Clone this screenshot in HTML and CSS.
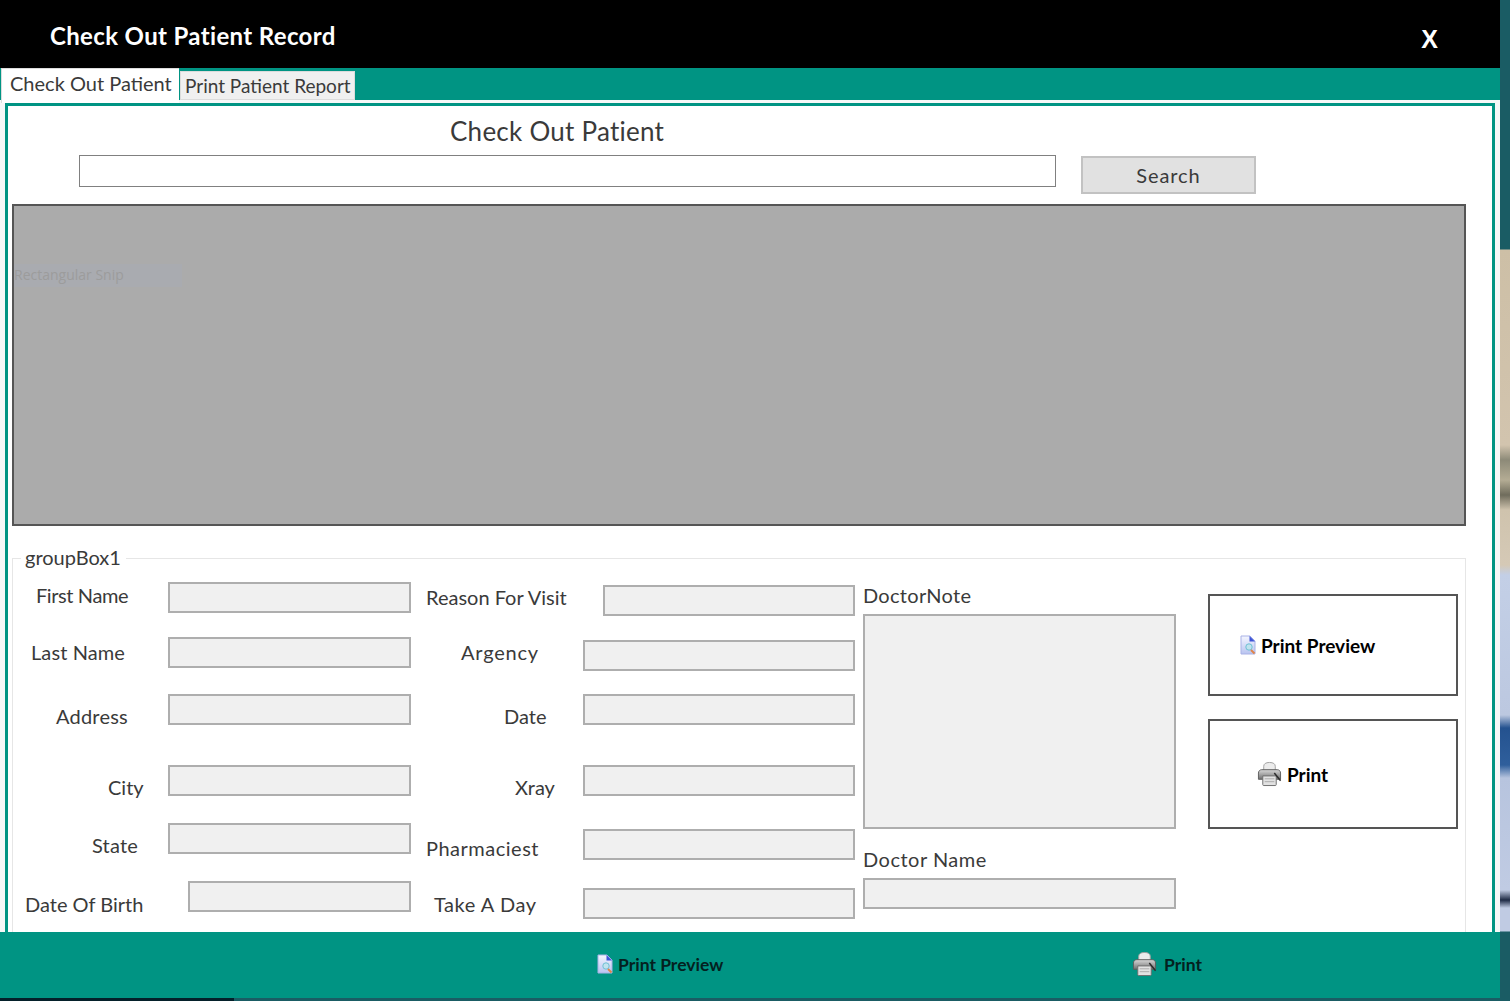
FILE: index.html
```html
<!DOCTYPE html>
<html lang="en">
<head>
  <meta charset="UTF-8" />
  <title>Check Out Patient Record</title>
  <meta name="viewport" content="width=device-width, initial-scale=1.0" />
  <link rel="stylesheet" href="styles.css">
</head>
<body>

  <svg class="icon-defs" width="0" height="0">
    <defs>
      <linearGradient id="pageFill" x1="0" y1="0" x2="0" y2="1">
        <stop offset="0" stop-color="#f4f6ff" />
        <stop offset="1" stop-color="#b9c4f0" />
      </linearGradient>
      <linearGradient id="printerBody" x1="0" y1="0" x2="0" y2="1">
        <stop offset="0" stop-color="#d8d8d8" />
        <stop offset="1" stop-color="#6f6f6f" />
      </linearGradient>
      <symbol id="icon-preview" viewBox="0 0 16 20">
        <path d="M1 1h9l5 5v13H1z" fill="url(#pageFill)" stroke="#a9b2e6" stroke-width="1" />
        <path d="M9.500 1v5.500H15z" fill="#3f55d6" />
        <circle cx="9" cy="12" r="3.200" fill="#bfe3ee" stroke="#6fc0d4" stroke-width="1" />
        <path d="M11 15l3.500 3.500" stroke="#e0854a" stroke-width="2" />
      </symbol>
      <symbol id="icon-printer" viewBox="0 0 26 26">
        <path d="M7 11V5C7 2.500 9 1 13 1s6 1.500 6 4v6z" fill="#ececec" stroke="#a0a0a0" />
        <path d="M1.500 12C1.500 10 3 8.500 5 8.500h16c2 0 3.500 1.500 3.500 3.500v6.500h-23z" fill="url(#printerBody)" stroke="#5e5e5e" />
        <path d="M6 15h14v9c0 .8-.5 1-1 1H7c-.5 0-1-.2-1-1z" fill="#e2e2e2" stroke="#6e6e6e" />
        <path d="M8 18h10M8 21h10" stroke="#aaa" />
        <path d="M18 12l6.500 8" stroke="#2b2b2b" stroke-width="1.500" />
      </symbol>
    </defs>
  </svg>

  <div class="desktop">
    <div class="window">
      <header class="titlebar">
        <h1 class="window-title">Check Out Patient Record</h1>
        <span class="close-x">X</span>
      </header>

      <nav class="tabstrip">
        <span class="tab tab-active">Check Out Patient</span>
        <span class="tab">Print Patient Report</span>
      </nav>

      <main class="tabpanel">
        <div class="panel-inner">
          <h2 class="panel-heading">Check Out Patient</h2>

          <div class="search-row">
            <input class="search-input" type="text" />
            <button class="search-btn">Search</button>
          </div>

          <div class="data-grid">
            <span class="snip-label">Rectangular Snip</span>
          </div>

          <fieldset class="group-box">
            <legend>groupBox1</legend>
            <div class="form-columns">

              <div class="form-col">
                <div class="field-row"><label class="lbl lbl-first">First Name</label><input class="box box-wide" /></div>
                <div class="field-row gap-24"><label class="lbl lbl-last">Last Name</label><input class="box box-wide" /></div>
                <div class="field-row gap-26"><label class="lbl lbl-address">Address</label><input class="box box-wide" /></div>
                <div class="field-row gap-40"><label class="lbl lbl-city">City</label><input class="box box-wide" /></div>
                <div class="field-row gap-27"><label class="lbl lbl-state">State</label><input class="box box-wide" /></div>
                <div class="field-row gap-27"><label class="lbl lbl-dob">Date Of Birth</label><input class="box box-dob" /></div>
              </div>

              <div class="form-col col-visit">
                <div class="field-row"><label class="lbl lbl-reason">Reason For Visit</label><input class="box box-reason" /></div>
                <div class="field-row gap-24"><label class="lbl lbl-argency">Argency</label><input class="box box-long" /></div>
                <div class="field-row gap-23"><label class="lbl lbl-date">Date</label><input class="box box-long" /></div>
                <div class="field-row gap-40"><label class="lbl lbl-xray">Xray</label><input class="box box-long" /></div>
                <div class="field-row gap-33"><label class="lbl lbl-pharm">Pharmaciest</label><input class="box box-long" /></div>
                <div class="field-row gap-28"><label class="lbl lbl-take">Take A Day</label><input class="box box-long" /></div>
              </div>

              <div class="form-col col-doctor">
                <label class="lbl-top">DoctorNote</label>
                <textarea class="box note-box"></textarea>
                <label class="lbl-top doctor-name">Doctor Name</label>
                <input class="box doctor-input" />
              </div>

              <div class="form-col col-actions">
                <button class="action-btn action-preview">
                  <svg class="ico-preview"><use href="#icon-preview" /></svg>
                  <span>Print Preview</span>
                </button>
                <button class="action-btn action-print">
                  <svg class="ico-printer"><use href="#icon-printer" /></svg>
                  <span>Print</span>
                </button>
              </div>

            </div>
          </fieldset>
        </div>
      </main>

      <footer class="footer">
        <div class="footer-bar">
          <span class="footer-btn">
            <svg class="ico-preview"><use href="#icon-preview" /></svg>
            Print Preview
          </span>
          <span class="footer-btn footer-print">
            <svg class="ico-printer"><use href="#icon-printer" /></svg>
            Print
          </span>
        </div>
        <div class="footer-edge"></div>
      </footer>
    </div>

    <div class="backdrop"></div>
  </div>

</body>
</html>
```

FILE: styles.css
```css
* {
  box-sizing: border-box;
}

body {
  margin: 0;
  height: 1001px;
  overflow: hidden;
  background-color: #1a5c64;
  font-family: Lato, "Open Sans", sans-serif;
  color: #3a3a3a;
}

.icon-defs {
  position: absolute;
}

.desktop {
  display: flex;
  height: 1001px;
}

.window {
  width: 1500px;
  height: 1001px;
  display: flex;
  flex-direction: column;
}

.backdrop {
  width: 10px;
  background: linear-gradient(180deg,
    #1a5c64 0, #1a5c64 249px,
    #cdbfa6 250px, #d2c4ae 445px,
    #8d8a78 460px, #b4ac94 480px, #6f6c5c 495px,
    #cfc3ad 510px, #d5c9b6 565px,
    #c3cfe6 575px, #bcc8e0 715px,
    #24528f 728px, #2f5f9c 765px,
    #b7c4de 778px, #c0cbe3 890px,
    #1e2a44 900px, #c0cbe3 908px,
    #c0cbe3 931px, #1a5c64 932px);
}

/* title bar */
.titlebar {
  height: 68px;
  background-color: #000;
  color: #fff;
  display: flex;
  justify-content: space-between;
  padding: 0 62px 0 50px;
}

.window-title {
  margin: 0;
  font-size: 24px;
  font-weight: 700;
  line-height: 71px;
  letter-spacing: 0.35px;
}

.close-x {
  font-family: "Liberation Sans", Arial, sans-serif;
  font-size: 25px;
  font-weight: 700;
  line-height: 78px;
}

/* tabs */
.tabstrip {
  height: 32px;
  background-color: #009483;
  display: flex;
  align-items: flex-start;
}

.tab {
  margin-top: 3px;
  width: 175px;
  height: 29px;
  padding-left: 4px;
  background-color: #f0f0f0;
  border: 1px solid #dcdcdc;
  font-size: 19px;
  line-height: 27px;
  white-space: nowrap;
}

.tab-active {
  position: relative;
  margin-top: 0;
  margin-left: 1px;
  margin-right: 1px;
  width: 178px;
  height: 35px;
  padding-left: 8px;
  background-color: #fff;
  border-width: 1px 0 0 1px;
  font-size: 20px;
  line-height: 29px;
}

/* main panel */
.tabpanel {
  height: 832px;
  overflow: hidden;
  background-color: #f6f8f8;
  padding: 3px 5px 0 5px;
}

.panel-inner {
  height: 100%;
  background-color: #fff;
  border: 3px solid #009483;
  border-bottom: 0;
  overflow: hidden;
}

.panel-heading {
  margin: 9px 0 0 442px;
  height: 31px;
  font-size: 26px;
  font-weight: 400;
  line-height: 32px;
  letter-spacing: 0.25px;
}

.search-row {
  display: flex;
  align-items: flex-start;
  margin: 9px 0 0 71px;
  gap: 25px;
}

.search-input {
  width: 977px;
  height: 32px;
  border: 1px solid #808080;
  background-color: #fff;
}

.search-btn {
  margin-top: 1px;
  width: 175px;
  height: 38px;
  background-color: #e1e1e1;
  border: 2px solid #c2c2c2;
  font-family: inherit;
  font-size: 20px;
  letter-spacing: 0.9px;
  color: #3a3a3a;
}

.data-grid {
  margin: 10px 0 0 4px;
  width: 1454px;
  height: 322px;
  background-color: #ababab;
  border: 2px solid #555;
  padding-top: 58px;
}

.snip-label {
  display: block;
  width: 168px;
  height: 23px;
  background-color: #a9abb0;
  font-family: "Open Sans", sans-serif;
  font-size: 14px;
  line-height: 22px;
  color: #9c9c9c;
}

/* group box */
.group-box {
  margin: 20px 0 0 4px;
  padding: 12px 0 0 0;
  width: 1454px;
  height: 400px;
  border: 1px solid #e6e6e6;
  min-inline-size: 0;
}

.group-box legend {
  margin-left: 8px;
  padding: 0 5px 0 4px;
  height: 24px;
  font-size: 20px;
  line-height: 22px;
}

.form-columns {
  display: grid;
  grid-template-columns: 398px 429px 313px 250px;
  align-items: start;
}

.form-col {
  display: flex;
  flex-direction: column;
}

.col-visit {
  margin-left: 15px;
  padding-top: 3px;
  width: 429px;
}

.col-doctor {
  margin-left: 23px;
}

.col-actions {
  margin-left: 55px;
  padding-top: 12px;
  gap: 23px;
}

.field-row {
  display: flex;
  justify-content: space-between;
  align-items: flex-start;
  height: 31px;
}

.gap-23 { margin-top: 23px; }
.gap-24 { margin-top: 24px; }
.gap-26 { margin-top: 26px; }
.gap-27 { margin-top: 27px; }
.gap-28 { margin-top: 28px; }
.gap-33 { margin-top: 33px; }
.gap-40 { margin-top: 40px; }

.lbl {
  font-size: 20px;
  line-height: 28px;
  white-space: nowrap;
}

.lbl-first { margin: -1px 0 0 23px; letter-spacing: -0.4px; }
.lbl-last { margin: 1px 0 0 18px; letter-spacing: 0.1px; }
.lbl-address { margin: 8px 0 0 43px; letter-spacing: 0.2px; }
.lbl-city { margin: 8px 0 0 95px; }
.lbl-state { margin: 8px 0 0 79px; letter-spacing: 0.2px; }
.lbl-dob { margin: 9px 0 0 12px; }

.lbl-reason { margin: -2px 0 0 0; }
.lbl-argency { margin: -2px 0 0 35px; letter-spacing: 0.8px; }
.lbl-date { margin: 8px 0 0 78px; }
.lbl-xray { margin: 8px 0 0 89px; }
.lbl-pharm { margin: 5px 0 0 0; letter-spacing: 0.5px; }
.lbl-take { margin: 2px 0 0 8px; letter-spacing: 0.55px; }

.box {
  display: block;
  height: 31px;
  background-color: #f0f0f0;
  border: 2px solid #aeaeae;
  border-radius: 0;
  resize: none;
}

.box-wide { width: 243px; }
.box-dob { width: 223px; }
.box-reason { width: 252px; }
.box-long { width: 272px; }

.lbl-top {
  display: block;
  height: 24px;
  margin-top: 1px;
  font-size: 20px;
  line-height: 24px;
  letter-spacing: 0.3px;
}

.note-box {
  width: 313px;
  height: 215px;
  margin-top: 7px;
}

.doctor-name {
  margin-top: 18px;
  letter-spacing: 0.5px;
}

.doctor-input {
  width: 313px;
  margin-top: 7px;
}

.action-btn {
  display: flex;
  align-items: center;
  width: 250px;
  background-color: #fff;
  border: 2px solid #555;
  font-family: inherit;
  font-size: 19px;
  font-weight: 700;
  color: #000;
}

.action-preview {
  height: 102px;
  padding: 0 0 0 30px;
  gap: 5px;
}

.action-print {
  height: 110px;
  padding: 0 0 0 47px;
  gap: 5px;
}

.ico-preview {
  width: 16px;
  height: 20px;
}

.ico-printer {
  width: 25px;
  height: 26px;
}

/* footer */
.footer {
  height: 69px;
}

.footer-bar {
  height: 66px;
  background-color: #009483;
  display: flex;
  align-items: center;
  justify-content: space-between;
  padding: 0 298px 2px 597px;
}

.footer-btn {
  display: flex;
  align-items: center;
  gap: 5px;
  font-size: 17.5px;
  font-weight: 700;
  color: #04211f;
}

.footer-print {
  gap: 7px;
}

.footer-edge {
  height: 3px;
  background: linear-gradient(90deg, #04202a 234px, #1a5c64 234px);
}
```
